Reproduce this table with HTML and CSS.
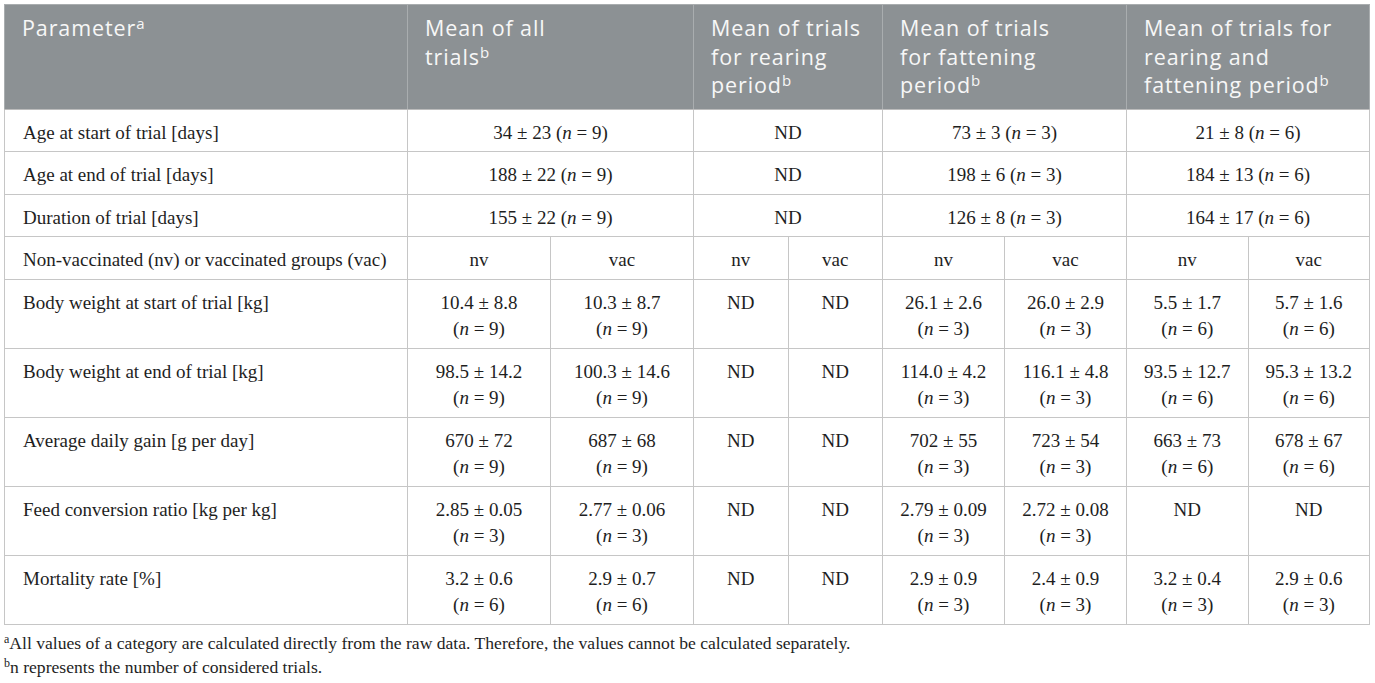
FILE: index.html
```html
<!DOCTYPE html>
<html lang="en">
<head>
  <meta charset="UTF-8">
  <title>Table</title>
  <link rel="stylesheet" href="styles.css">
</head>
<body>
<div class="page">
  <table class="data">
    <colgroup>
      <col class="c-param">
      <col class="c-all"><col class="c-all">
      <col class="c-rear"><col class="c-rear">
      <col class="c-fat"><col class="c-fat">
      <col class="c-both"><col class="c-both">
    </colgroup>
    <thead>
      <tr>
        <th>Parameter<sup>a</sup></th>
        <th colspan="2">Mean of all<br>trials<sup>b</sup></th>
        <th colspan="2">Mean of trials<br>for rearing<br>period<sup>b</sup></th>
        <th colspan="2">Mean of trials<br>for fattening<br>period<sup>b</sup></th>
        <th colspan="2">Mean of trials for<br>rearing and<br>fattening period<sup>b</sup></th>
      </tr>
    </thead>
    <tbody>
      <tr>
        <td class="label">Age at start of trial [days]</td>
        <td colspan="2">34 &plusmn; 23 (<i>n</i> = 9)</td>
        <td colspan="2">ND</td>
        <td colspan="2">73 &plusmn; 3 (<i>n</i> = 3)</td>
        <td colspan="2">21 &plusmn; 8 (<i>n</i> = 6)</td>
      </tr>
      <tr>
        <td class="label">Age at end of trial [days]</td>
        <td colspan="2">188 &plusmn; 22 (<i>n</i> = 9)</td>
        <td colspan="2">ND</td>
        <td colspan="2">198 &plusmn; 6 (<i>n</i> = 3)</td>
        <td colspan="2">184 &plusmn; 13 (<i>n</i> = 6)</td>
      </tr>
      <tr>
        <td class="label">Duration of trial [days]</td>
        <td colspan="2">155 &plusmn; 22 (<i>n</i> = 9)</td>
        <td colspan="2">ND</td>
        <td colspan="2">126 &plusmn; 8 (<i>n</i> = 3)</td>
        <td colspan="2">164 &plusmn; 17 (<i>n</i> = 6)</td>
      </tr>
      <tr>
        <td class="label">Non-vaccinated (nv) or vaccinated groups (vac)</td>
        <td>nv</td><td>vac</td>
        <td>nv</td><td>vac</td>
        <td>nv</td><td>vac</td>
        <td>nv</td><td>vac</td>
      </tr>
      <tr>
        <td class="label">Body weight at start of trial [kg]</td>
        <td>10.4 &plusmn; 8.8<br>(<i>n</i> = 9)</td>
        <td>10.3 &plusmn; 8.7<br>(<i>n</i> = 9)</td>
        <td>ND</td><td>ND</td>
        <td>26.1 &plusmn; 2.6<br>(<i>n</i> = 3)</td>
        <td>26.0 &plusmn; 2.9<br>(<i>n</i> = 3)</td>
        <td>5.5 &plusmn; 1.7<br>(<i>n</i> = 6)</td>
        <td>5.7 &plusmn; 1.6<br>(<i>n</i> = 6)</td>
      </tr>
      <tr>
        <td class="label">Body weight at end of trial [kg]</td>
        <td>98.5 &plusmn; 14.2<br>(<i>n</i> = 9)</td>
        <td>100.3 &plusmn; 14.6<br>(<i>n</i> = 9)</td>
        <td>ND</td><td>ND</td>
        <td>114.0 &plusmn; 4.2<br>(<i>n</i> = 3)</td>
        <td>116.1 &plusmn; 4.8<br>(<i>n</i> = 3)</td>
        <td>93.5 &plusmn; 12.7<br>(<i>n</i> = 6)</td>
        <td>95.3 &plusmn; 13.2<br>(<i>n</i> = 6)</td>
      </tr>
      <tr>
        <td class="label">Average daily gain [g per day]</td>
        <td>670 &plusmn; 72<br>(<i>n</i> = 9)</td>
        <td>687 &plusmn; 68<br>(<i>n</i> = 9)</td>
        <td>ND</td><td>ND</td>
        <td>702 &plusmn; 55<br>(<i>n</i> = 3)</td>
        <td>723 &plusmn; 54<br>(<i>n</i> = 3)</td>
        <td>663 &plusmn; 73<br>(<i>n</i> = 6)</td>
        <td>678 &plusmn; 67<br>(<i>n</i> = 6)</td>
      </tr>
      <tr>
        <td class="label">Feed conversion ratio [kg per kg]</td>
        <td>2.85 &plusmn; 0.05<br>(<i>n</i> = 3)</td>
        <td>2.77 &plusmn; 0.06<br>(<i>n</i> = 3)</td>
        <td>ND</td><td>ND</td>
        <td>2.79 &plusmn; 0.09<br>(<i>n</i> = 3)</td>
        <td>2.72 &plusmn; 0.08<br>(<i>n</i> = 3)</td>
        <td>ND</td><td>ND</td>
      </tr>
      <tr>
        <td class="label">Mortality rate [%]</td>
        <td>3.2 &plusmn; 0.6<br>(<i>n</i> = 6)</td>
        <td>2.9 &plusmn; 0.7<br>(<i>n</i> = 6)</td>
        <td>ND</td><td>ND</td>
        <td>2.9 &plusmn; 0.9<br>(<i>n</i> = 3)</td>
        <td>2.4 &plusmn; 0.9<br>(<i>n</i> = 3)</td>
        <td>3.2 &plusmn; 0.4<br>(<i>n</i> = 3)</td>
        <td>2.9 &plusmn; 0.6<br>(<i>n</i> = 3)</td>
      </tr>
    </tbody>
  </table>
  <div class="notes">
    <p><sup>a</sup>All values of a category are calculated directly from the raw data. Therefore, the values cannot be calculated separately.</p>
    <p><sup>b</sup>n represents the number of considered trials.</p>
  </div>
</div>
</body>
</html>
```
FILE: styles.css
```css
* {
  margin: 0;
  padding: 0;
}

body {
  background: #fff;
}

.page {
  padding: 4px;
}

.data {
  width: 1366px;
  border-collapse: collapse;
  table-layout: fixed;
  border: 1px solid #bcbcbc;
}

.c-param { width: 403px; }
.c-all { width: 143px; }
.c-rear { width: 94.5px; }
.c-fat { width: 122px; }
.c-both { width: 121.5px; }

.data th {
  background: #8c9194;
  color: #f7f7f7;
  font-family: "Open Sans", sans-serif;
  font-weight: 400;
  font-size: 21.5px;
  letter-spacing: 0.9px;
  line-height: 28.5px;
  text-align: left;
  vertical-align: top;
  padding: 9px 10px 9px 17px;
  border: 1px solid #a9adaf;
  border-bottom-color: #bcbcbc;
}

.data th sup {
  font-size: 15px;
  letter-spacing: 0;
  vertical-align: 7px;
  line-height: 0;
}

.data td {
  font-family: "Liberation Serif", "Times New Roman", serif;
  font-size: 19px;
  line-height: 26.5px;
  color: #1e1e1e;
  text-align: center;
  vertical-align: top;
  padding: 10px 6px 5px;
  border: 1px solid #c6c6c6;
}

.data td.label {
  text-align: left;
  padding-left: 18px;
}

.notes {
  margin-top: 6px;
  font-family: "Liberation Serif", "Times New Roman", serif;
  font-size: 17.6px;
  line-height: 24px;
  color: #1e1e1e;
}

.notes sup {
  font-size: 12px;
  vertical-align: 6px;
  line-height: 0;
}
```
